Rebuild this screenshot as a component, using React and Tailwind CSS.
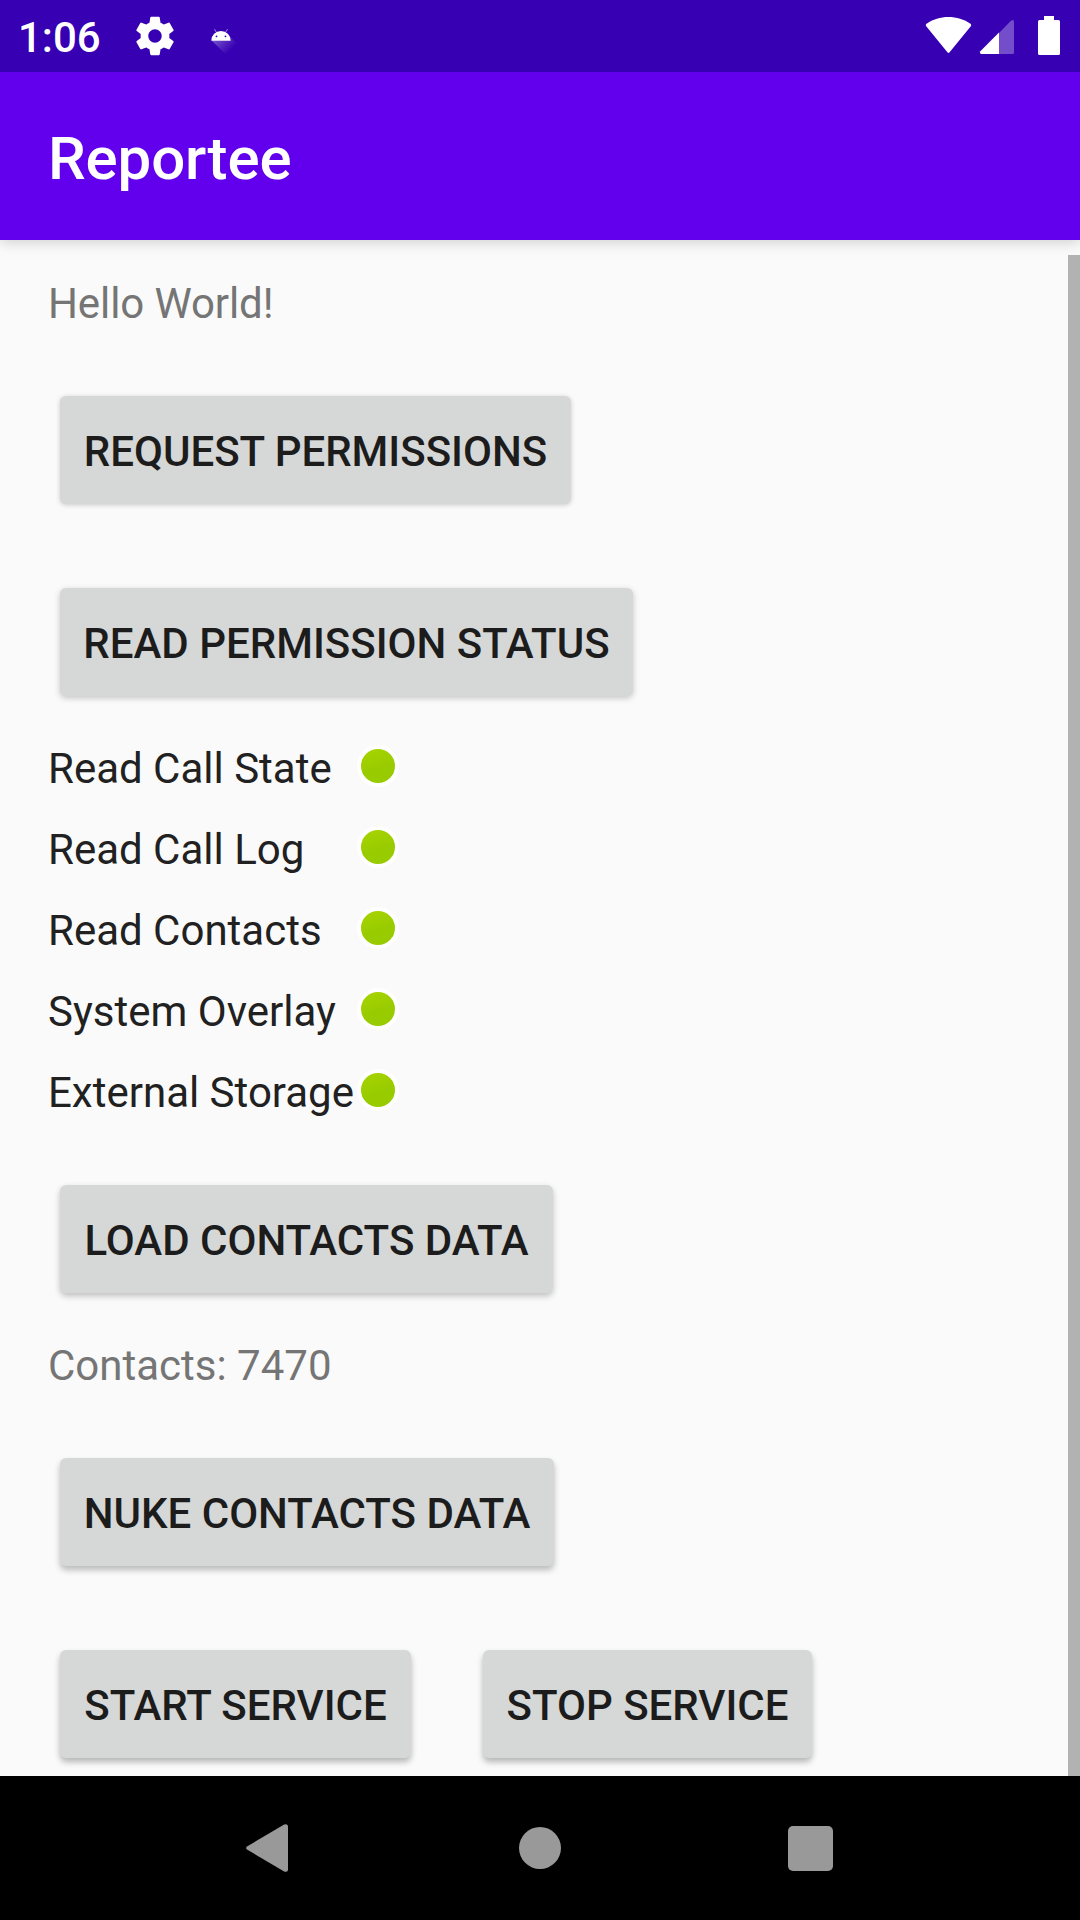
const permissions = [
  "Read Call State",
  "Read Call Log",
  "Read Contacts",
  "System Overlay",
  "External Storage",
];

function StatusBar() {
  return (
    <div className="z-20 flex h-[72px] items-start bg-[#3700b3] text-white">
      <span className="ml-[18px] mt-[9px] w-[114px] whitespace-nowrap text-[42px] font-medium leading-[57px]">1:06</span>
      <svg className="mt-[13px] h-[46px] w-[46px] shrink-0" viewBox="0 0 24 24" fill="currentColor">
        <path d="M19.43 12.98c.04-.32.07-.64.07-.98s-.03-.66-.07-.98l2.11-1.65c.19-.15.24-.42.12-.64l-2-3.46c-.12-.22-.39-.3-.61-.22l-2.49 1c-.52-.4-1.08-.73-1.69-.98l-.38-2.65C14.46 2.18 14.25 2 14 2h-4c-.25 0-.46.18-.49.42l-.38 2.65c-.61.25-1.17.59-1.69.98l-2.49-1c-.23-.09-.49 0-.61.22l-2 3.46c-.13.22-.07.49.12.64l2.11 1.65c-.04.32-.07.65-.07.98s.03.66.07.98l-2.11 1.65c-.19.15-.24.42-.12.64l2 3.46c.12.22.39.3.61.22l2.49-1c.52.4 1.08.73 1.69.98l.38 2.65c.03.24.24.42.49.42h4c.25 0 .46-.18.49-.42l.38-2.65c.61-.25 1.17-.59 1.69-.98l2.49 1c.23.09.49 0 .61-.22l2-3.46c.12-.22.07-.49-.12-.64l-2.11-1.65zM12 15.5c-1.93 0-3.5-1.57-3.5-3.5s1.57-3.5 3.5-3.5 3.5 1.57 3.5 3.5-1.57 3.5-3.5 3.5z" />
      </svg>
      <svg className="ml-[30px] mt-[26px] h-[32px] w-[32px] shrink-0" viewBox="208 26 32 32">
        <defs>
          <linearGradient id="castShadow" x1="217" y1="38" x2="230" y2="51" gradientUnits="userSpaceOnUse">
            <stop offset="0" stopColor="#fff" stopOpacity="0.3" />
            <stop offset="1" stopColor="#fff" stopOpacity="0" />
          </linearGradient>
        </defs>
        <path d="M211.5 40.5H230.5V37L239 45.5L229 56L227.5 56Z" fill="url(#castShadow)" />
        <path d="M214.5 29.2l2.2 3.6M227.5 29.2l-2.2 3.6" stroke="#fff" strokeOpacity="0.6" strokeWidth="0.9" />
        <path
          fillRule="evenodd"
          fill="#fff"
          d="M211.3 40.7a9.7 9.7 0 0 1 19.4 0zM215.6 36.3a.9.9 0 1 0 1.8 0a.9.9 0 1 0-1.8 0zM224.6 36.3a.9.9 0 1 0 1.8 0a.9.9 0 1 0-1.8 0z"
        />
      </svg>
      <svg className="ml-auto mr-[18px] mt-[12px] h-[48px] w-[140px] shrink-0" viewBox="922 12 140 48" fill="#fff">
        <path d="M926.2 26.3Q925 25 926.5 23.8C939 14.7 958 14.7 970.5 23.8Q972 25 970.8 26.3L949.6 52.3Q948.5 53.5 947.4 52.3Z" />
        <path opacity="0.3" d="M999 33L1011.2 20.5Q1014 18.8 1014 21.8V52.5Q1014 54 1012.5 54H999Z" />
        <path d="M999 32.6V54H981.5Q979.2 53.5 980.3 51.2Z" />
        <path d="M1044 16H1054V20H1058.5Q1060 20 1060 21.5V53.5Q1060 55 1058.5 55H1039.5Q1038 55 1038 53.5V21.5Q1038 20 1039.5 20H1044Z" />
      </svg>
    </div>
  );
}

function AppBar() {
  return (
    <header className="z-10 flex h-[168px] items-center bg-[#6200ee] pl-12 shadow-[0_3px_12px_rgba(0,0,0,0.16)]">
      <h1 className="mt-[6px] whitespace-nowrap text-[60px] font-medium leading-[80px] tracking-[-0.15px] text-white">Reportee</h1>
    </header>
  );
}

function Button({ children, className }) {
  return (
    <button
      className={
        "flex h-[108px] shrink-0 justify-center whitespace-nowrap rounded-[6px] bg-[#d6d7d7] pt-[27px] text-[42px] font-medium uppercase leading-[57px] text-[#1c1c1c] " +
        className
      }
    >
      {children}
    </button>
  );
}

function PermissionRow({ label }) {
  return (
    <li className="flex h-[81px] items-start">
      <span className="mt-[14px] w-[309px] whitespace-nowrap text-[42px] leading-[57px] text-[#212121]">{label}</span>
      <span className="mt-[19px] h-[42px] w-[42px] rounded-full border-4 border-white bg-[linear-gradient(160deg,#a8d400_12%,#99cc00_52%)] bg-origin-border" />
    </li>
  );
}

function NavigationBar() {
  return (
    <nav className="flex h-[144px] shrink-0 items-center justify-center bg-black">
      <div className="flex w-[270px] justify-center">
        <svg className="h-[50px] w-[50px]" viewBox="0 0 50 50" fill="#999">
          <path d="M2.4 23.2L39.2 1.6Q43 .2 43 3.7V46.3Q43 49.8 39.2 48.4L2.4 26.8Q-.2 25 2.4 23.2Z" />
        </svg>
      </div>
      <div className="flex w-[270px] justify-center">
        <span className="h-[42px] w-[42px] rounded-full bg-[#999]" />
      </div>
      <div className="flex w-[270px] justify-center">
        <span className="h-[45px] w-[45px] rounded-[5px] bg-[#999]" />
      </div>
    </nav>
  );
}

export default function App() {
  return (
    <div className="flex h-[1920px] w-[1080px] flex-col overflow-hidden bg-[#fafafa] font-['Roboto',sans-serif]">
      <StatusBar />
      <AppBar />
      <main className="flex min-h-0 flex-1">
        <div className="flex flex-1 flex-col items-start pl-12">
          <p className="mt-[35px] text-[42px] leading-[57px] tracking-[-0.1px] text-[#757575]">Hello World!</p>
          <Button className="ml-3 mt-16 w-[511px] shadow-[0_1px_5px_rgba(0,0,0,0.2)]">Request Permissions</Button>
          <Button className="ml-3 mt-[84px] w-[573px] shadow-[0_2px_6px_rgba(0,0,0,0.22)]">Read Permission Status</Button>
          <ul className="mt-[30px]">
            {permissions.map((label) => (
              <PermissionRow key={label} label={label} />
            ))}
          </ul>
          <Button className="ml-3 mt-[54px] w-[493px] shadow-[0_3px_6px_rgba(0,0,0,0.24)]">Load Contacts Data</Button>
          <p className="mt-[44px] text-[42px] leading-[57px] text-[#757575]">Contacts: 7470</p>
          <Button className="ml-3 mt-16 w-[494px] shadow-[0_4px_6px_rgba(0,0,0,0.26)]">Nuke Contacts Data</Button>
          <div className="ml-3 mt-[84px] flex gap-[72px]">
            <Button className="w-[351px] shadow-[0_4px_6px_rgba(0,0,0,0.28)]">Start Service</Button>
            <Button className="w-[329px] shadow-[0_4px_6px_rgba(0,0,0,0.28)]">Stop Service</Button>
          </div>
        </div>
        <div className="mt-[15px] w-3 bg-[#b2b2b2]" />
      </main>
      <NavigationBar />
    </div>
  );
}
